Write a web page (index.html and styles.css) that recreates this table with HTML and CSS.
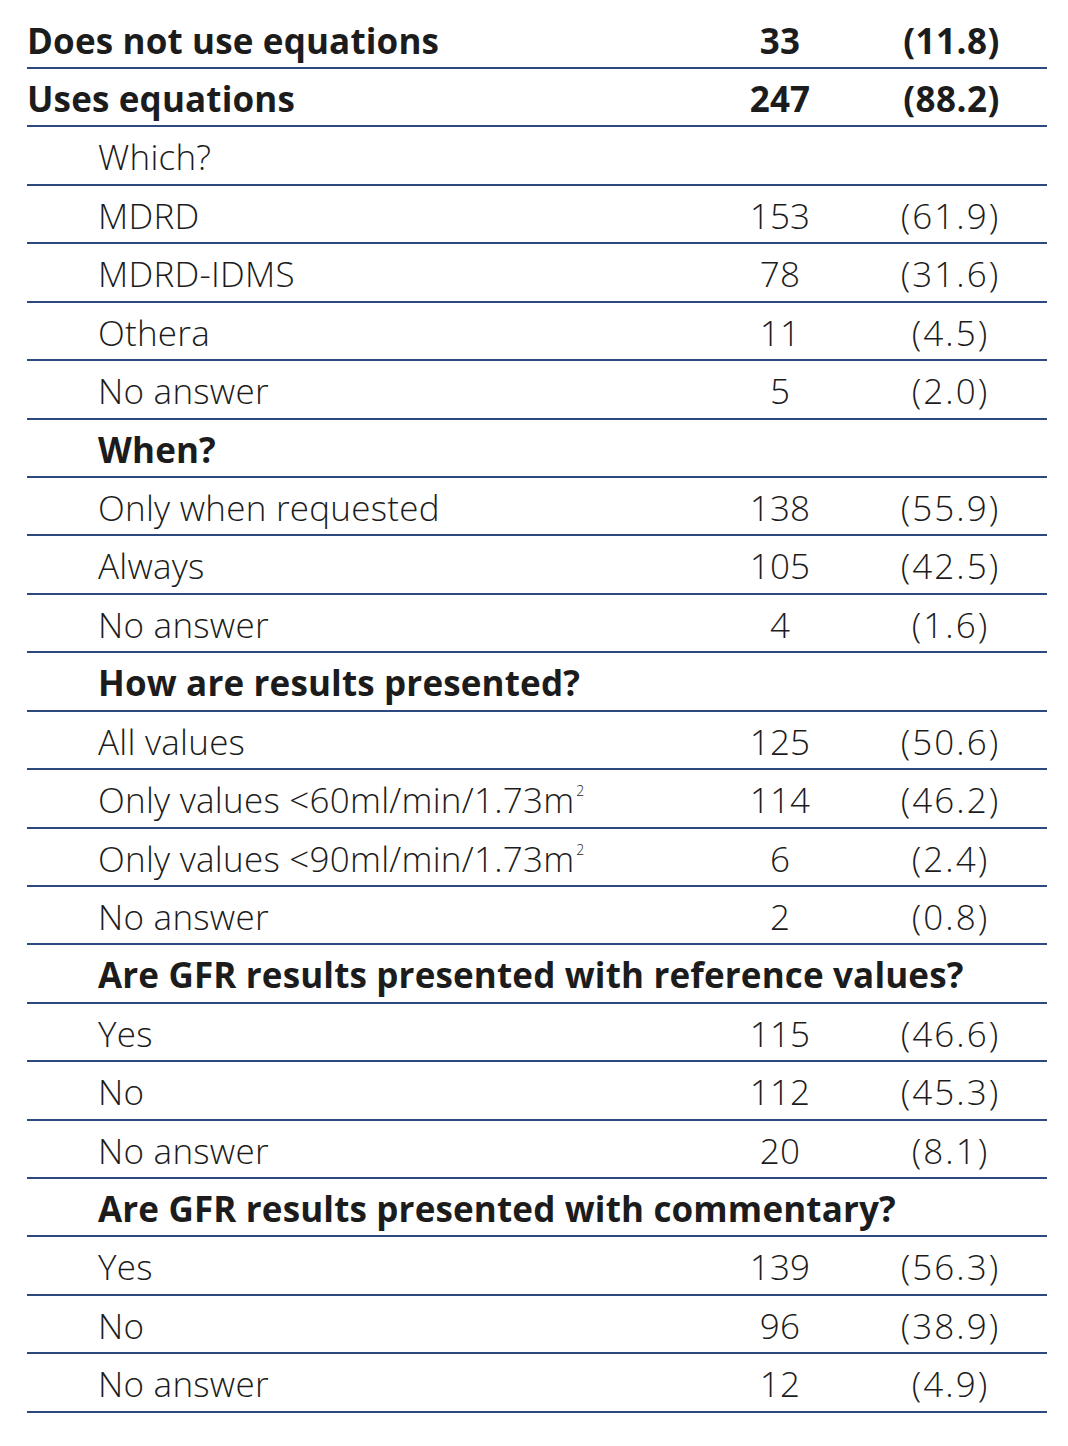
FILE: index.html
```html
<!DOCTYPE html>
<html lang="en">
<head>
<meta charset="utf-8">
<title>Equations table</title>
<link rel="stylesheet" href="styles.css">
</head>
<body>
<div class="table">
  <div class="row strong"><div class="label">Does not use equations</div><div class="num">33</div><div class="pct">(11.8)</div></div>
  <div class="row strong"><div class="label">Uses equations</div><div class="num">247</div><div class="pct">(88.2)</div></div>
  <div class="row"><div class="label sub span">Which?</div></div>
  <div class="row"><div class="label sub">MDRD</div><div class="num">153</div><div class="pct">(61.9)</div></div>
  <div class="row"><div class="label sub">MDRD-IDMS</div><div class="num">78</div><div class="pct">(31.6)</div></div>
  <div class="row"><div class="label sub">Othera</div><div class="num">11</div><div class="pct">(4.5)</div></div>
  <div class="row"><div class="label sub">No answer</div><div class="num">5</div><div class="pct">(2.0)</div></div>
  <div class="row strong"><div class="label sub span">When?</div></div>
  <div class="row"><div class="label sub">Only when requested</div><div class="num">138</div><div class="pct">(55.9)</div></div>
  <div class="row"><div class="label sub">Always</div><div class="num">105</div><div class="pct">(42.5)</div></div>
  <div class="row"><div class="label sub">No answer</div><div class="num">4</div><div class="pct">(1.6)</div></div>
  <div class="row strong"><div class="label sub span">How are results presented?</div></div>
  <div class="row"><div class="label sub">All values</div><div class="num">125</div><div class="pct">(50.6)</div></div>
  <div class="row"><div class="label sub">Only values &lt;60ml/min/1.73m<sup class="sq">2</sup></div><div class="num">114</div><div class="pct">(46.2)</div></div>
  <div class="row"><div class="label sub">Only values &lt;90ml/min/1.73m<sup class="sq">2</sup></div><div class="num">6</div><div class="pct">(2.4)</div></div>
  <div class="row"><div class="label sub">No answer</div><div class="num">2</div><div class="pct">(0.8)</div></div>
  <div class="row strong"><div class="label sub span">Are GFR results presented with reference values?</div></div>
  <div class="row"><div class="label sub">Yes</div><div class="num">115</div><div class="pct">(46.6)</div></div>
  <div class="row"><div class="label sub">No</div><div class="num">112</div><div class="pct">(45.3)</div></div>
  <div class="row"><div class="label sub">No answer</div><div class="num">20</div><div class="pct">(8.1)</div></div>
  <div class="row strong"><div class="label sub span">Are GFR results presented with commentary?</div></div>
  <div class="row"><div class="label sub">Yes</div><div class="num">139</div><div class="pct">(56.3)</div></div>
  <div class="row"><div class="label sub">No</div><div class="num">96</div><div class="pct">(38.9)</div></div>
  <div class="row"><div class="label sub">No answer</div><div class="num">12</div><div class="pct">(4.9)</div></div>
</div>
</body>
</html>
```

FILE: styles.css
```css
html, body {
  margin: 0;
  padding: 0;
  background: #ffffff;
}

body {
  font-family: "Open Sans", "Noto Sans", sans-serif;
  color: #1c1c1c;
}

.table {
  margin-left: 27px;
  width: 1020px;
  padding-top: 10.6px;
}

.row {
  display: grid;
  grid-template-columns: 693px 120px 207px;
  height: 58.43px;
  box-sizing: border-box;
  border-bottom: 2px solid #2d4a80;
  padding-top: 3px;
  font-size: 35px;
  font-weight: 300;
  letter-spacing: 0.25px;
  line-height: 53.43px;
  white-space: nowrap;
}

.strong {
  font-weight: 700;
  letter-spacing: 0.15px;
}

.label.sub {
  padding-left: 71px;
}

.label.span {
  grid-column: 1 / -1;
}

.num {
  text-align: center;
}

.pct {
  text-align: center;
  padding-left: 14px;
  letter-spacing: 2px;
}

.strong .pct {
  letter-spacing: 0.5px;
  padding-left: 16px;
}

.sq {
  font-size: 14px;
  vertical-align: top;
  line-height: 1;
  position: relative;
  top: 11px;
  margin-left: 2px;
  letter-spacing: 0;
}
```
